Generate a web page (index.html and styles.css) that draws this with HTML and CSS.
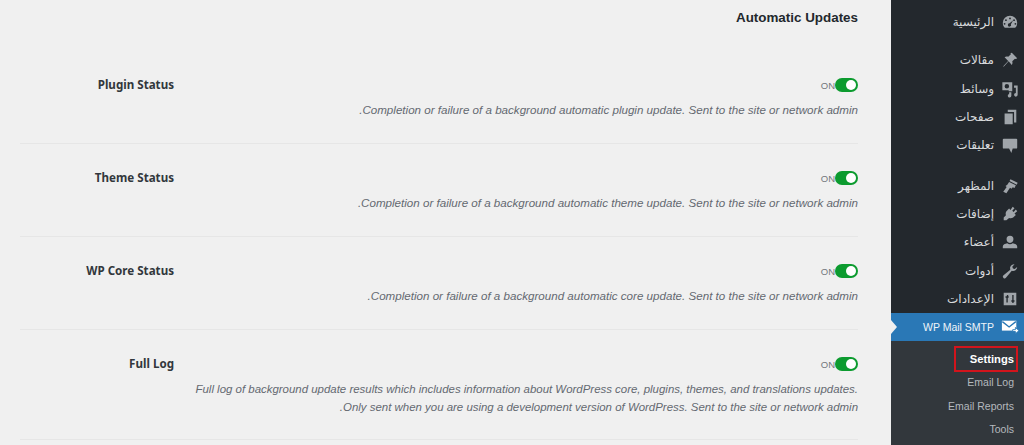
FILE: index.html
```html
<!DOCTYPE html>
<html lang="ar" dir="rtl">

<head>
    <meta charset="UTF-8">
    <meta name="viewport" content="width=device-width, initial-scale=1.0">
    <title>Automatic Updates</title>
    <link rel="stylesheet" href="styles.css">
</head>

<body>
    <nav class="sidebar">
        <ul class="menu">
            <li class="menu-item"><svg class="menu-icon" viewBox="0 0 20 20"><path d="M10 3a8 8 0 0 0-8 8c0 2.200.8 4 2.200 5.400h11.600A7.600 7.600 0 0 0 18 11a8 8 0 0 0-8-8zm0 2a1 1 0 1 1 0 2 1 1 0 0 1 0-2zM5.500 7a1 1 0 1 1 0 2 1 1 0 0 1 0-2zm9 0a1 1 0 1 1 0 2 1 1 0 0 1 0-2zM4 11a1 1 0 1 1 0 2 1 1 0 0 1 0-2zm12 0a1 1 0 1 1 0 2 1 1 0 0 1 0-2zm-2.500-3L11 12.500a1.800 1.800 0 1 1-1.500-1z" fill-rule="evenodd"/></svg><span>الرئيسية</span></li>

            <li class="menu-item menu-gap"><svg class="menu-icon" viewBox="0 0 20 20"><path d="M12 2l6 6-1.500 1-1-.5-3 3c.5 1.500.3 3-.5 4L8.500 11.500 3 17.500l-.5-.5 5.500-6L4 7c1-.8 2.500-1 4-.5l3-3-.5-1z"/></svg><span>مقالات</span></li>
            <li class="menu-item"><svg class="menu-icon" viewBox="0 0 20 20"><path fill-rule="evenodd" d="M1.500 2.500h11v10H8.500v-1h-7zM6.500 4.500a2.500 2.500 0 1 0 0 5 2.500 2.500 0 0 0 0-5zM14.500 6H18.500v10.500a2 2 0 1 1-2-2V8.500h-2zM9 13.500h2.500v4a2 2 0 1 1-2.500-2z"/></svg><span>وسائط</span></li>
            <li class="menu-item"><svg class="menu-icon" viewBox="0 0 20 20"><path d="M7.500 2H17v14h-2.500V4.500h-7zM4 6h9v12H4z"/></svg><span>صفحات</span></li>
            <li class="menu-item"><svg class="menu-icon" viewBox="0 0 20 20"><path d="M3 3h14a1 1 0 0 1 1 1v9a1 1 0 0 1-1 1h-4l-1.500 5-2.500-5H3a1 1 0 0 1-1-1V4a1 1 0 0 1 1-1z"/></svg><span>تعليقات</span></li>

            <li class="menu-item menu-gap-big"><svg class="menu-icon" viewBox="0 0 20 20"><path d="M10.500 2.500l8 4-1 2-8-4zM9 5.500l7.500 3.800-1.500 3-2-1-1.200 1.700-1.800-1L6 18 2.500 16.500l3.800-5.500-1.300-1L7 8.500z"/></svg><span>المظهر</span></li>
            <li class="menu-item"><svg class="menu-icon" viewBox="0 0 20 20"><path d="M13 2l2 1.500-2.500 3 1.500 1.200L16.500 5 18 7l-3 2.500 1.500 1.500-3 3c-1.500 1-3 1-4.500.5L6 17H3v-3l2.500-2.500C5 10 5 8.500 6 7l3-3 1.500 1.500z"/></svg><span>إضافات</span></li>
            <li class="menu-item"><svg class="menu-icon" viewBox="0 0 20 20"><path d="M10 3a3.800 3.800 0 0 1 3.800 4c0 2-1.300 4-3.800 4S6.200 9 6.200 7A3.800 3.800 0 0 1 10 3zM7 11.500c.8.600 1.800 1 3 1s2.200-.4 3-1c2.500.5 5 1.500 5 3.500v2H2v-2c0-2 2.500-3 5-3.500z"/></svg><span>أعضاء</span></li>
            <li class="menu-item"><svg class="menu-icon" viewBox="0 0 20 20"><path d="M18 5.500a4.500 4.500 0 0 1-6 4.200L5.500 17.500a1.900 1.900 0 0 1-3-2.500l7.800-6.500A4.500 4.500 0 0 1 15 2.500l-2.500 2.700.8 2 2 .6L18 5.500z"/></svg><span>أدوات</span></li>
            <li class="menu-item"><svg class="menu-icon" viewBox="0 0 20 20"><path fill-rule="evenodd" d="M3 3h14v14H3zM5 7v1.500h1V14h1.500V8.500h1V7H8V5.500H6.500V7zm6.500 4.500V13h1v1.500H14V13h1v-1.500h-1V5.500h-1.500v6z"/></svg><span>الإعدادات</span></li>

            <li class="menu-item active"><svg class="menu-icon" viewBox="0 0 20 20"><path d="M1 3h16v11H1z"/><path class="mail-line" d="M1.500 4l7.500 6 7.500-6"/><path class="mail-arrow" d="M13 13h3v-2.500l4 3.500-4 3.500V15h-3z"/></svg><span>WP Mail SMTP</span></li>
        </ul>
        <ul class="submenu">
            <li class="submenu-item"><a class="current" href="#">Settings</a></li>
            <li class="submenu-item"><a href="#">Email Log</a></li>
            <li class="submenu-item"><a href="#">Email Reports</a></li>
            <li class="submenu-item"><a href="#">Tools</a></li>
        </ul>
    </nav>

    <main class="content">
        <h2 class="title">Automatic Updates</h2>

        <section class="row">
            <div class="row-main">
                <div class="toggle-line"><span class="toggle"></span><span class="toggle-label">ON</span></div>
                <p class="desc">Completion or failure of a background automatic plugin update. Sent to the site or network admin.</p>
            </div>
            <h3 class="row-label">Plugin Status</h3>
        </section>

        <section class="row">
            <div class="row-main">
                <div class="toggle-line"><span class="toggle"></span><span class="toggle-label">ON</span></div>
                <p class="desc">Completion or failure of a background automatic theme update. Sent to the site or network admin.</p>
            </div>
            <h3 class="row-label">Theme Status</h3>
        </section>

        <section class="row">
            <div class="row-main">
                <div class="toggle-line"><span class="toggle"></span><span class="toggle-label">ON</span></div>
                <p class="desc">Completion or failure of a background automatic core update. Sent to the site or network admin.</p>
            </div>
            <h3 class="row-label">WP Core Status</h3>
        </section>

        <section class="row">
            <div class="row-main">
                <div class="toggle-line"><span class="toggle"></span><span class="toggle-label">ON</span></div>
                <p class="desc desc-long">Full log of background update results which includes information about WordPress core, plugins, themes, and translations updates. Only sent when you are using a development version of WordPress. Sent to the site or network admin.</p>
            </div>
            <h3 class="row-label">Full Log</h3>
        </section>
    </main>
</body>

</html>
```

FILE: styles.css
```css
* {
    box-sizing: border-box;
    margin: 0;
    padding: 0;
}
html, body {
    height: 445px;
    overflow: hidden;
}
body {
    display: flex;
    background-color: #f0f0f0;
    font-family: "Liberation Sans", "DejaVu Sans", sans-serif;
}
ul {
    list-style: none;
}

/* sidebar */
.sidebar {
    width: 133px;
    flex-shrink: 0;
    background-color: #23282d;
    padding-top: 8px;
}
.menu-item {
    height: 28.3px;
    display: flex;
    align-items: center;
    gap: 7px;
    padding-right: 5px;
    color: #d8dadc;
    font-family: "DejaVu Sans", sans-serif;
    font-size: 12px;
}
.menu-gap {
    margin-top: 10px;
}
.menu-gap-big {
    margin-top: 12px;
}
.menu-icon {
    width: 18px;
    height: 18px;
    fill: #a0a5aa;
    flex-shrink: 0;
}
.menu-item.active {
    position: relative;
    background-color: #2a78b6;
    color: #eef4f9;
    font-family: "Liberation Sans", sans-serif;
    font-size: 10.500px;
}
.menu-item.active .menu-icon {
    fill: #fff;
}
.mail-line {
    fill: none;
    stroke: #2a78b6;
    stroke-width: 1.5;
}
.menu-item.active .mail-arrow {
    stroke: #2a78b6;
    stroke-width: 1;
}
.menu-item.active::after {
    content: "";
    position: absolute;
    left: 0;
    top: 7px;
    border-left: 6px solid #f0f0f0;
    border-top: 7px solid transparent;
    border-bottom: 7px solid transparent;
}
.submenu {
    background-color: #32373c;
    padding-top: 6px;
    height: 105px;
}
.submenu-item {
    height: 23.4px;
    display: flex;
    align-items: center;
    padding-right: 10px;
    font-size: 10.500px;
}
.submenu-item a {
    color: #b4b9be;
    text-decoration: none;
}
.submenu-item a.current {
    color: #fff;
    font-weight: bold;
    font-size: 11.200px;
    border: 2px solid #d2141c;
    margin-right: -4px;
    padding: 5px 2px 5px 14px;
}

/* main */
.content {
    flex: 1;
    padding: 0 33px 0 20px;
    color: #23282d;
}
.title {
    font-size: 13.400px;
    line-height: 18px;
    padding-top: 9px;
    height: 50px;
}
.row {
    display: flex;
    justify-content: space-between;
    height: 93px;
    padding-top: 26px;
    border-bottom: 1px solid #e6e6e6;
}
.row:first-of-type {
    height: 94px;
    padding-top: 27px;
}
.row:last-of-type {
    height: 110px;
}
.row-main {
    flex: 1;
}
.row-label {
    width: 154px;
    line-height: 16px;
    color: #32373c;
    font-family: "Noto Sans", sans-serif;
    font-weight: bold;
    font-size: 11.600px;
}
.toggle-line {
    display: flex;
    align-items: center;
    height: 16px;
}
.toggle {
    width: 23px;
    height: 14px;
    border-radius: 7px;
    background-color: #0c9b2f;
    position: relative;
}
.toggle::after {
    content: "";
    position: absolute;
    right: 2px;
    top: 2px;
    width: 10px;
    height: 10px;
    border-radius: 50%;
    background-color: #fff;
}
.toggle-label {
    font-size: 9.500px;
    color: #72777c;
}
.desc {
    margin-top: 8px;
    max-width: 680px;
    font-size: 11.600px;
    line-height: 18px;
    font-style: italic;
    color: #646970;
}
.desc-long {
    font-size: 11.450px;
}
```
